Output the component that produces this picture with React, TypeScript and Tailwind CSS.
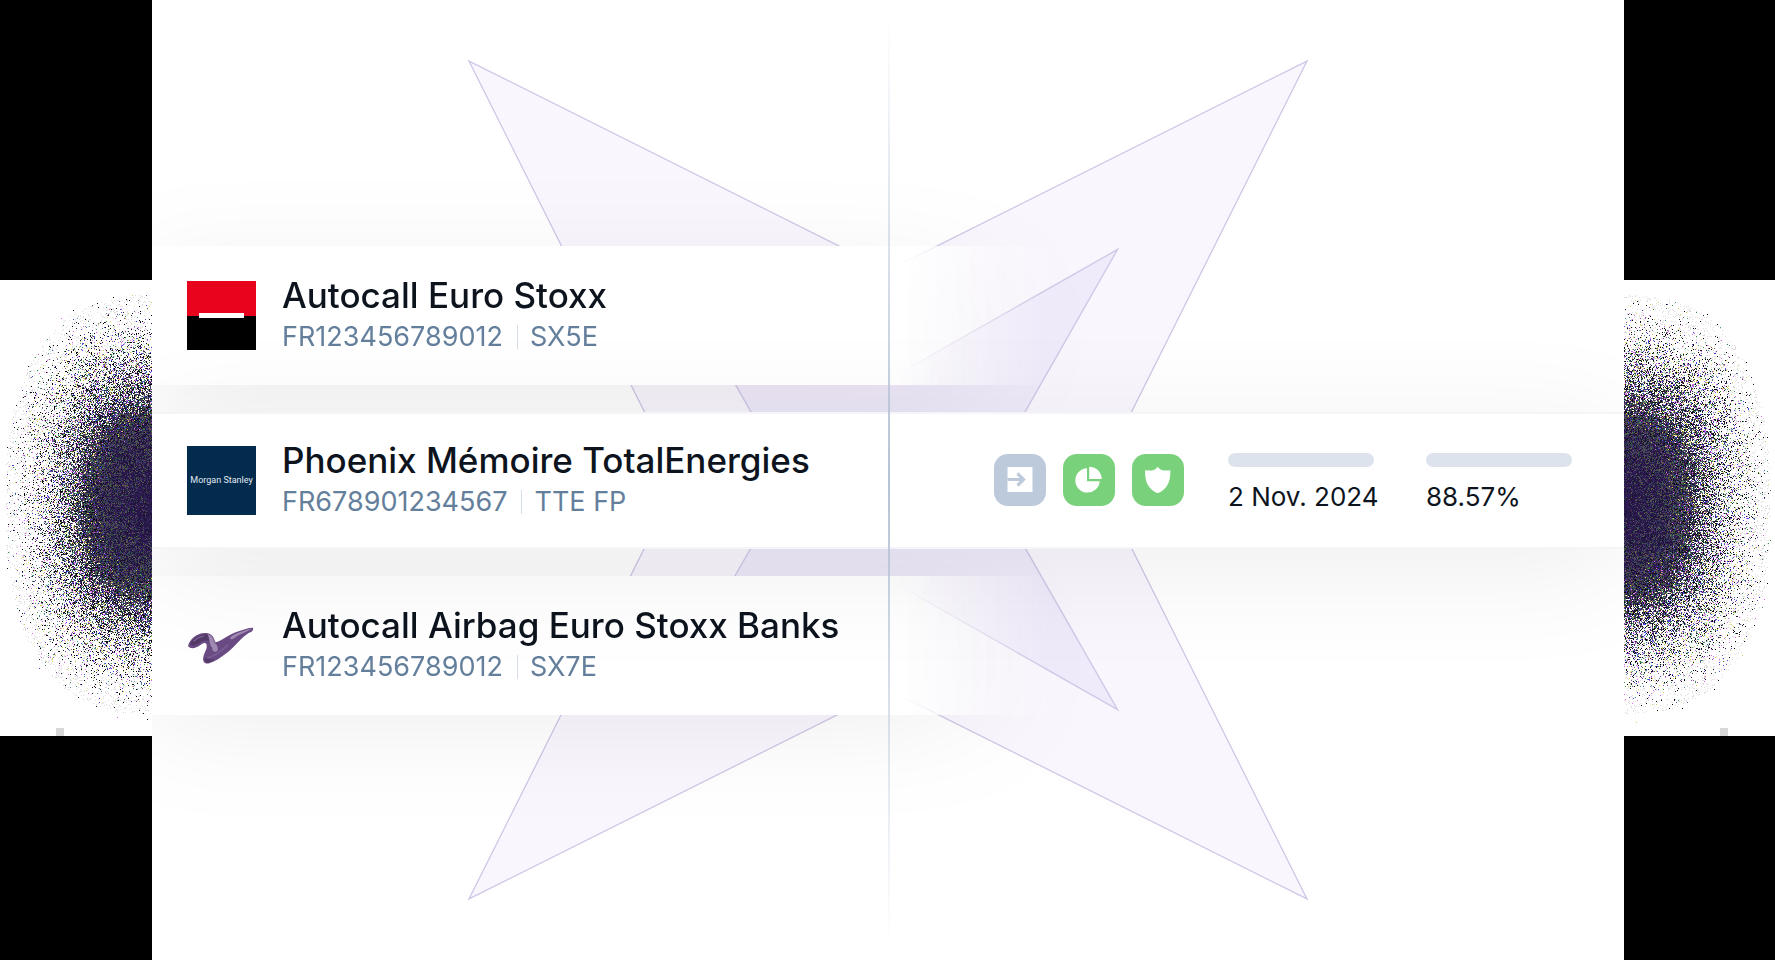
import type { ReactNode } from "react";

const NOISE_W = 152;
const NOISE_H = 456;
const CORE = ["#2a1648", "#2d1a55", "#1f1b3a", "#33205c", "#241240"];
const MID = ["#34465a", "#3f5044", "#5a4662", "#2c4c44", "#17122a", "#45306a", "#625c40"];
const RIM = ["#000000", "#000000", "#14101c", "#24203a", "#3a8a48", "#e066f0", "#4c44e0", "#d8cf58", "#8a4a9c", "#4f9490"];
const HAZE = "#dedede";
const TONES = [...new Set([...CORE, ...MID, ...RIM, HAZE])];

function createRandom(seed: number) {
  let s = seed;
  return () => {
    s = (s * 1664525 + 1013904223) % 4294967296;
    return s / 4294967296;
  };
}

// Density of the speckle falls off with the distance from the inner edge.
function buildNoise(seed: number): Map<string, string> {
  const random = createRandom(seed);
  const paths = new Map<string, string>(TONES.map((tone) => [tone, ""]));
  const put = (tone: string, x: number, y: number) => paths.set(tone, `${paths.get(tone)}M${x} ${y}h1`);
  const choose = (list: string[]) => list[Math.floor(random() * list.length)];
  for (let y = 0; y < NOISE_H; y++) {
    for (let x = 0; x < NOISE_W; x++) {
      const dx = (NOISE_W - x) / 150;
      const dy = Math.abs(y - 224) / 214;
      const r = Math.pow(Math.pow(dx, 2.5) + Math.pow(dy, 2.5), 1 / 2.5);
      const t = Math.max(0, Math.min(1, (1.03 - r) / 0.62));
      const density = Math.pow(t, 1.9);
      if (random() > density) {
        if (r < 0.98 && random() < 0.1) put(HAZE, x, y);
        continue;
      }
      const zone = r + (random() - 0.5) * 0.44;
      if (zone < 0.2) put(choose(CORE), x, y);
      else if (zone < 0.52) put(random() < 0.3 ? choose(CORE) : choose(MID), x, y);
      else put(choose(RIM), x, y);
    }
  }
  return paths;
}

const LEFT_NOISE = buildNoise(17);
const RIGHT_NOISE = buildNoise(91);

function SidePanel({ paths, mirrored = false }: { paths: Map<string, string>; mirrored?: boolean }) {
  return (
    <aside aria-hidden="true" className="flex flex-col bg-black">
      <div className="grow-[280]" />
      <svg
        viewBox={`0 0 ${NOISE_W} ${NOISE_H}`}
        preserveAspectRatio={mirrored ? "xMinYMid slice" : "xMaxYMid slice"}
        className="block h-[456px] w-full shrink-0 bg-white"
        shapeRendering="crispEdges"
      >
        <g transform={mirrored ? "translate(152 0) scale(-1 1)" : undefined} fill="none" strokeWidth="1">
          {[...paths].map(([tone, d]) => (
            <path key={tone} d={d} stroke={tone} transform="translate(0 .5)" />
          ))}
          <rect x={mirrored ? 48 : 56} y="448" width="8" height="8" fill="#d8d8d8" />
        </g>
      </svg>
      <div className="grow-[224]" />
    </aside>
  );
}

function StarBackdrop() {
  return (
    <svg
      aria-hidden="true"
      viewBox="0 0 840 840"
      className="absolute top-1/2 left-1/2 size-[842px] -translate-x-1/2 -translate-y-1/2"
      strokeWidth="1.4"
      stroke="#d2c9e8"
    >
      <path d="M2 2 420 211 838 2 629 420 838 838 420 629 2 838 211 420Z" fill="#f9f6fd" />
      <path d="M191 190 420 320 649 190 518 420 649 649 420 519 191 649 322 420Z" fill="#f0ebfb" />
    </svg>
  );
}

function SocieteGeneraleLogo() {
  return (
    <svg role="img" aria-label="Société Générale" viewBox="0 0 69 69" className="size-[69px] shrink-0">
      <path fill="#e9041e" d="M0 0h69v35H0z" />
      <path fill="#000" d="M0 35h69v34H0z" />
      <path fill="#fff" d="M12 32h45v5H12z" />
    </svg>
  );
}

function MorganStanleyLogo() {
  return (
    <div className="flex size-[69px] shrink-0 items-center justify-center bg-[#022b4e] font-[Roboto,sans-serif] text-[9px] leading-none whitespace-nowrap text-[#e2eaf1]">
      Morgan Stanley
    </div>
  );
}

function NatixisLogo() {
  return (
    <svg role="img" aria-label="Natixis" viewBox="21 -12 207 207" className="size-[69px] shrink-0">
      <path
        fill="#6b4b84"
        d="M24 93C28 72 56 48 84 55C101 60 102 72 106 82C124 80 148 55 178 48C192 44 206 37 219 38C221 45 217 50 207 53C185 66 160 100 140 114C122 128 106 139 88 145C73 149 67 138 70 126C73 112 82 103 80 90C77 80 68 84 60 91C48 100 32 104 24 93Z"
      />
      <path fill="#533a68" d="M30 88C38 68 60 56 84 59C91 66 90 73 86 78C72 75 66 77 58 84C48 91 38 95 30 88ZM74 128C84 130 94 138 106 130C98 139 88 143 81 143C75 140 72 135 74 128Z" />
      <path fill="#a08bb3" d="M83 58C98 62 99 72 104 83C112 90 116 99 112 108C103 114 96 108 97 98C88 92 91 78 83 58ZM150 68C166 54 190 48 216 40C202 52 180 56 162 70C156 74 152 74 150 68Z" />
      <path fill="none" stroke="#7d6297" strokeWidth="4" strokeLinecap="round" d="M84 128C103 125 128 104 144 90M42 78C51 69 62 65 70 64" />
    </svg>
  );
}

function ProductInfo({ logo, name, isin, ticker }: { logo: ReactNode; name: string; isin: string; ticker: string }) {
  return (
    <div className="flex items-center gap-[26px] pl-[35px]">
      {logo}
      <div>
        <h2 className="text-[35px] leading-[44px] font-medium whitespace-nowrap text-[#0d141e]">{name}</h2>
        <p className="flex items-center text-[27px] leading-10 whitespace-nowrap text-[#647f9b]">
          <span>{isin}</span>
          <span className="mr-3 ml-3.5 h-6 w-px bg-[#d5dde8]" />
          <span>{ticker}</span>
        </p>
      </div>
    </div>
  );
}

function IconTile({ label, tone, children }: { label: string; tone: string; children: ReactNode }) {
  return (
    <div role="img" aria-label={label} className={`size-[52px] rounded-[14px] ${tone}`}>
      <svg viewBox="0 0 52 52" className="size-full" fill="#fff">
        {children}
      </svg>
    </div>
  );
}

function Metric({ value }: { value: string }) {
  return (
    <div className="w-[146px] pt-1.5">
      <div className="h-3.5 rounded-full bg-[#dde3ed]" />
      <p className="mt-3.5 text-[26px] leading-8 whitespace-nowrap text-[#0d141e]">{value}</p>
    </div>
  );
}

const FADED_CARD =
  "flex h-[139px] w-[894px] items-center bg-linear-to-r from-white from-83% to-transparent drop-shadow-[0_18px_48px_rgba(10,0,20,0.06)]";

export default function App() {
  return (
    <div className="grid min-h-screen grid-cols-[152px_minmax(0,1fr)_151px] bg-white font-[Inter,sans-serif]">
      <SidePanel paths={LEFT_NOISE} />
      <main className="relative flex flex-col justify-center gap-[27px] overflow-hidden bg-white">
        <StarBackdrop />
        <section className={FADED_CARD}>
          <ProductInfo logo={<SocieteGeneraleLogo />} name="Autocall Euro Stoxx" isin="FR123456789012" ticker="SX5E" />
        </section>
        <section className="relative z-10 flex h-[137px] items-center justify-between border-y-2 border-[#f4f4f9] bg-white shadow-[0_20px_120px_rgba(10,0,20,0.07)]">
          <ProductInfo
            logo={<MorganStanleyLogo />}
            name="Phoenix Mémoire TotalEnergies"
            isin="FR678901234567"
            ticker="TTE FP"
          />
          <div className="flex items-center pr-[52px]">
            <div className="mr-11 flex gap-[17px]">
              <IconTile label="Entry" tone="bg-[#bccadb]">
                <path d="M13.5 13h25v25h-25z" />
                <path d="M13.5 25.5H29M23.5 19.5l6 6-6 6" fill="none" stroke="#bccadb" strokeWidth="3.2" />
              </IconTile>
              <IconTile label="Allocation" tone="bg-[#79d17b]">
                <path d="M24 14.2A12.2 12.2 0 1 0 36.7 27.3H24z" />
                <path d="M26.2 12.8A12.4 12.4 0 0 1 38.7 25.1H26.2z" />
              </IconTile>
              <IconTile label="Protection" tone="bg-[#79d17b]">
                <path d="M25.7 12.7C28.2 16 31.8 17.4 38.3 16.2C38.9 27.6 34.7 35.8 25.7 39.2C16.7 35.8 12.5 27.6 13.1 16.2C19.6 17.4 23.2 16 25.7 12.7Z" />
              </IconTile>
            </div>
            <div className="flex gap-[52px]">
              <Metric value="2 Nov. 2024" />
              <Metric value="88.57%" />
            </div>
          </div>
        </section>
        <section className={FADED_CARD}>
          <ProductInfo
            logo={<NatixisLogo />}
            name="Autocall Airbag Euro Stoxx Banks"
            isin="FR123456789012"
            ticker="SX7E"
          />
        </section>
        <div className="absolute inset-y-4 left-1/2 z-20 w-0.5 bg-linear-to-b from-transparent via-[#b4c3d6] to-transparent" />
      </main>
      <SidePanel paths={RIGHT_NOISE} mirrored />
    </div>
  );
}
